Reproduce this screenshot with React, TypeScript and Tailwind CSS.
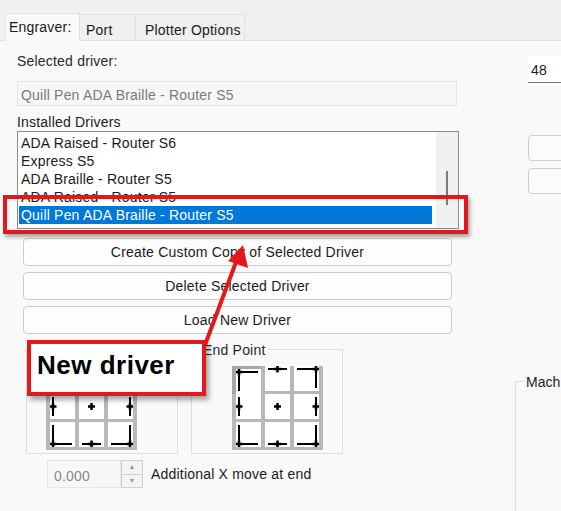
import React from 'react';

// ---------- Types ----------
type Pos = 'tl' | 'tm' | 'tr' | 'ml' | 'mm' | 'mr' | 'bl' | 'bm' | 'br';

const drivers = [
  'ADA Raised - Router S6',
  'Express S5',
  'ADA Braille - Router S5',
  'ADA Raised - Router S5',
  'Quill Pen ADA Braille - Router S5',
];

const gridOrder: Pos[] = ['tl', 'tm', 'tr', 'ml', 'mm', 'mr', 'bl', 'bm', 'br'];

// ---------- Alignment glyph drawn inside each point button ----------
const PointGlyph = ({ pos }: { pos: Pos }) => {
  const w = 25;
  const h = 25;
  const e = 3;
  const x = pos[1] === 'l' ? e : pos[1] === 'r' ? w - e : w / 2;
  const y = pos[0] === 't' ? e : pos[0] === 'b' ? h - e : h / 2;
  const edges: string[] = [];
  if (pos[0] === 't') edges.push(`M${e} ${e}H${w - e}`);
  if (pos[0] === 'b') edges.push(`M${e} ${h - e}H${w - e}`);
  if (pos[1] === 'l') edges.push(`M${e} ${e}V${h - e}`);
  if (pos[1] === 'r') edges.push(`M${w - e} ${e}V${h - e}`);
  const tick = `M${x - 3.5} ${y}H${x + 3.5}M${x} ${y - 3.5}V${y + 3.5}`;
  return (
    <svg width={w} height={h} viewBox={`0 0 ${w} ${h}`} className="block">
      {edges.map((d, i) => (
        <path key={i} d={d} stroke="#000" strokeWidth={2} fill="none" />
      ))}
      <path d={tick} stroke="#000" strokeWidth={2.5} fill="none" />
    </svg>
  );
};

const PointGrid = ({ pressed }: { pressed?: Pos }) => (
  <div className="grid grid-cols-[repeat(3,29px)] grid-rows-[repeat(3,28px)] border-r-4 border-[#b8b8b8] w-fit">
    {gridOrder.map((p) => (
      <div
        key={p}
        className={
          p === pressed
            ? 'bg-white border-l-4 border-t-[3px] border-[#a6a6a6] overflow-hidden'
            : 'bg-white border-l-4 border-b-[3px] border-[#b8b8b8] overflow-hidden'
        }
      >
        <PointGlyph pos={p} />
      </div>
    ))}
  </div>
);

const Button = ({ label }: { label: string }) => (
  <div className="h-[28px] rounded-[4px] border border-[#cccccc] bg-[#fdfdfd] flex items-center justify-center text-[#1b1b1b]">
    {label}
  </div>
);

// ---------- Page ----------
export default function App() {
  return (
    <main className="relative w-[561px] h-[511px] overflow-hidden bg-[#f9f9f9] text-[14px] tracking-[0.2px] text-[#1b1b1b] font-['Liberation_Sans',Arial,sans-serif]">
      {/* --- Tab strip --- */}
      <div className="h-[41px] bg-[#f0f0f0] border-b border-[#e2e2e2] flex items-end pl-[5px]">
        <div className="h-[28px] w-[75px] bg-[#f9f9f9] border-t border-l border-r border-[#e2e2e2] -mb-px pl-[3px] pt-[3px]">Engraver:</div>
        <div className="h-[26px] w-[56px] border-t border-r border-[#e2e2e2] pl-[6px] pt-[5px]">Port</div>
        <div className="h-[26px] w-[109px] border-t border-r border-[#e2e2e2] pl-[9px] pt-[5px]">Plotter Options</div>
      </div>

      <div className="flex">
        {/* --- Left column: driver selection --- */}
        <div className="w-[470px] pl-[17px] pt-[10px]">
          <div className="h-[18px] text-[#2a2a2a]">Selected driver:</div>
          <div className="mt-[12px] w-[440px] h-[25px] border border-[#e6e6e6] bg-[#f7f7f7] text-[#7a7a7a] pl-[3px] pt-[3px]">
            Quill Pen ADA Braille - Router S5
          </div>
          <div className="mt-[6px] h-[19px]">Installed Drivers</div>
          <div className="w-[442px] h-[98px] border border-[#8c8c8c] bg-white flex">
            <div className="flex-1 pt-[2px] pl-[1px] pr-[4px]">
              {drivers.map((d, i) => (
                <div
                  key={d}
                  className={
                    i === drivers.length - 1
                      ? 'h-[18px] leading-[18px] pl-[2px] bg-[#0078d7] text-white'
                      : 'h-[18px] leading-[18px] pl-[2px]'
                  }
                >
                  {d}
                </div>
              ))}
            </div>
            <div className="w-[22px] bg-[#f0f0f0] flex justify-center pt-[39px]">
              <div className="w-[2px] h-[34px] bg-[#7a7a7a]" />
            </div>
          </div>

          <div className="mt-[9px] ml-[6px] w-[429px] flex flex-col gap-[6px]">
            <Button label="Create Custom Copy of Selected Driver" />
            <Button label="Delete Selected Driver" />
            <Button label="Load New Driver" />
          </div>

          {/* --- Start / End point groups --- */}
          <div className="mt-[15px] ml-[9px] flex gap-[13px]">
            <div className="w-[152px] h-[105px] border border-[#dedede] pl-[19px] pt-[16px]">
              <PointGrid />
            </div>
            <div className="relative w-[152px] h-[105px] border border-[#dedede] pl-[40px] pt-[16px]">
              <span className="absolute -top-[10px] left-[9px] bg-[#f9f9f9] px-[2px] text-[#2a2a2a]">End Point</span>
              <PointGrid pressed="tl" />
            </div>
          </div>

          <div className="mt-[6px] ml-[30px] flex items-center">
            <div className="w-[74px] h-[28px] border border-[#e6e6e6] bg-[#f7f7f7] text-[#8a8a8a] pl-[6px] pt-[5px]">0.000</div>
            <div className="w-[22px] h-[28px] flex flex-col border border-[#d0d0d0] bg-[#f3f3f3]">
              <div className="flex-1 border-b border-[#d0d0d0] flex items-center justify-center text-[7px] text-[#999]">▲</div>
              <div className="flex-1 flex items-center justify-center text-[7px] text-[#999]">▼</div>
            </div>
            <span className="ml-[8px]">Additional X move at end</span>
          </div>
        </div>

        {/* --- Right column --- */}
        <div className="flex-1 relative">
          <div className="absolute left-[58px] top-[14px] w-[60px] h-[28px] bg-white border-b border-[#7a7a7a] pl-[3px] pt-[5px]">48</div>
          <div className="absolute left-[58px] top-[94px] w-[60px] h-[26px] rounded-[4px] border border-[#cfcfcf] bg-[#fbfbfb]" />
          <div className="absolute left-[58px] top-[127px] w-[60px] h-[26px] rounded-[4px] border border-[#cfcfcf] bg-[#fbfbfb]" />
          <div className="absolute left-[45px] top-[340px] w-[60px] h-[200px] border-l border-t border-[#dcdcdc]" />
          <span className="absolute left-[55px] top-[331px] bg-[#f9f9f9] px-[1px] tracking-normal text-[#1b1b1b]">Mach</span>
        </div>
      </div>

      {/* --- Highlight around the selected driver --- */}
      <div className="absolute left-[3px] top-[195px] w-[465px] h-[39px] border-4 border-[#e3181e] shadow-[2px_3px_4px_rgba(0,0,0,0.35)]" />

      {/* --- Arrow pointing at the highlight --- */}
      <svg className="absolute left-0 top-0" width={561} height={511}>
        <line x1={205} y1={345} x2={236} y2={262} stroke="#e3181e" strokeWidth={4} />
        <polygon points="243,245 248,268 228,261" fill="#e3181e" />
      </svg>

      {/* --- Callout label --- */}
      <div className="absolute left-[27px] top-[340px] w-[179px] h-[56px] bg-white border-4 border-[#e3181e] shadow-[3px_4px_5px_rgba(0,0,0,0.35)] pl-[6px] pt-[2px] text-[26px] tracking-[0.5px] font-bold text-black">
        New driver
      </div>
    </main>
  );
}
